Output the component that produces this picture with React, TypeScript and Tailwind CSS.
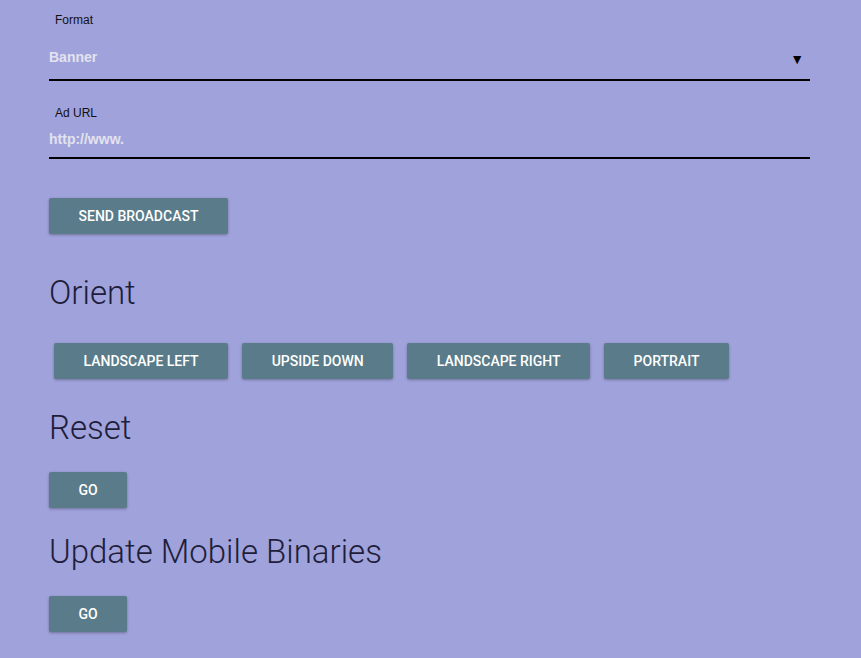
import React from 'react';

const Btn = ({ label, className = '' }: { label: string; className?: string }) => (
    <button
        className={`h-9 px-[29.5px] rounded-[2px] bg-[#5a7b89] text-white text-[14px] font-medium uppercase shadow-[0_1px_3px_rgba(0,0,0,0.3)] ${className}`}
    >
        {label}
    </button>
);

const Heading = ({ children }: { children: React.ReactNode }) => (
    <h2 className="text-[33px] leading-[40px] font-light text-[#1e1e3a]">{children}</h2>
);

const App = () => {
    const orients = ['Landscape Left', 'Upside Down', 'Landscape Right', 'Portrait'];

    return (
        <div className="min-h-[658px] bg-[#a0a2dc] font-['Roboto',sans-serif] pl-[49px] pr-[51px] pt-[13px]">
            <div className="flex flex-col">
                <label className="pl-[6px] text-[12px] leading-[14px] text-[#111] font-['Liberation_Sans',sans-serif]">Format</label>
                <div className="mt-[20px] flex items-center justify-between border-b-2 border-black pb-[13px] h-[34px]">
                    <span className="text-[14px] leading-[20px] font-bold text-[#e3e3ee] font-['Liberation_Sans',sans-serif]">Banner</span>
                    <span className="mr-[6px] mt-[6px] text-[14px] text-black">▼</span>
                </div>

                <label className="mt-[25px] pl-[6px] text-[12px] leading-[14px] text-[#111] font-['Liberation_Sans',sans-serif]">Ad URL</label>
                <div className="mt-[7px] border-b-2 border-black h-[32px]">
                    <span className="text-[14px] leading-[20px] font-bold text-[#e3e3ee] font-['Liberation_Sans',sans-serif]">http://www.</span>
                </div>

                <div className="mt-[39px]">
                    <Btn label="Send Broadcast" />
                </div>

                <div className="mt-[39px]">
                    <Heading>Orient</Heading>
                </div>
                <div className="mt-[30px] ml-[5px] flex gap-[14px]">
                    {orients.map((o) => (
                        <Btn key={o} label={o} />
                    ))}
                </div>

                <div className="mt-[29px]">
                    <Heading>Reset</Heading>
                </div>
                <div className="mt-[24px]">
                    <Btn label="Go" />
                </div>

                <div className="mt-[24px]">
                    <Heading>Update Mobile Binaries</Heading>
                </div>
                <div className="mt-[24px]">
                    <Btn label="Go" />
                </div>
            </div>
        </div>
    );
};

export default App;
